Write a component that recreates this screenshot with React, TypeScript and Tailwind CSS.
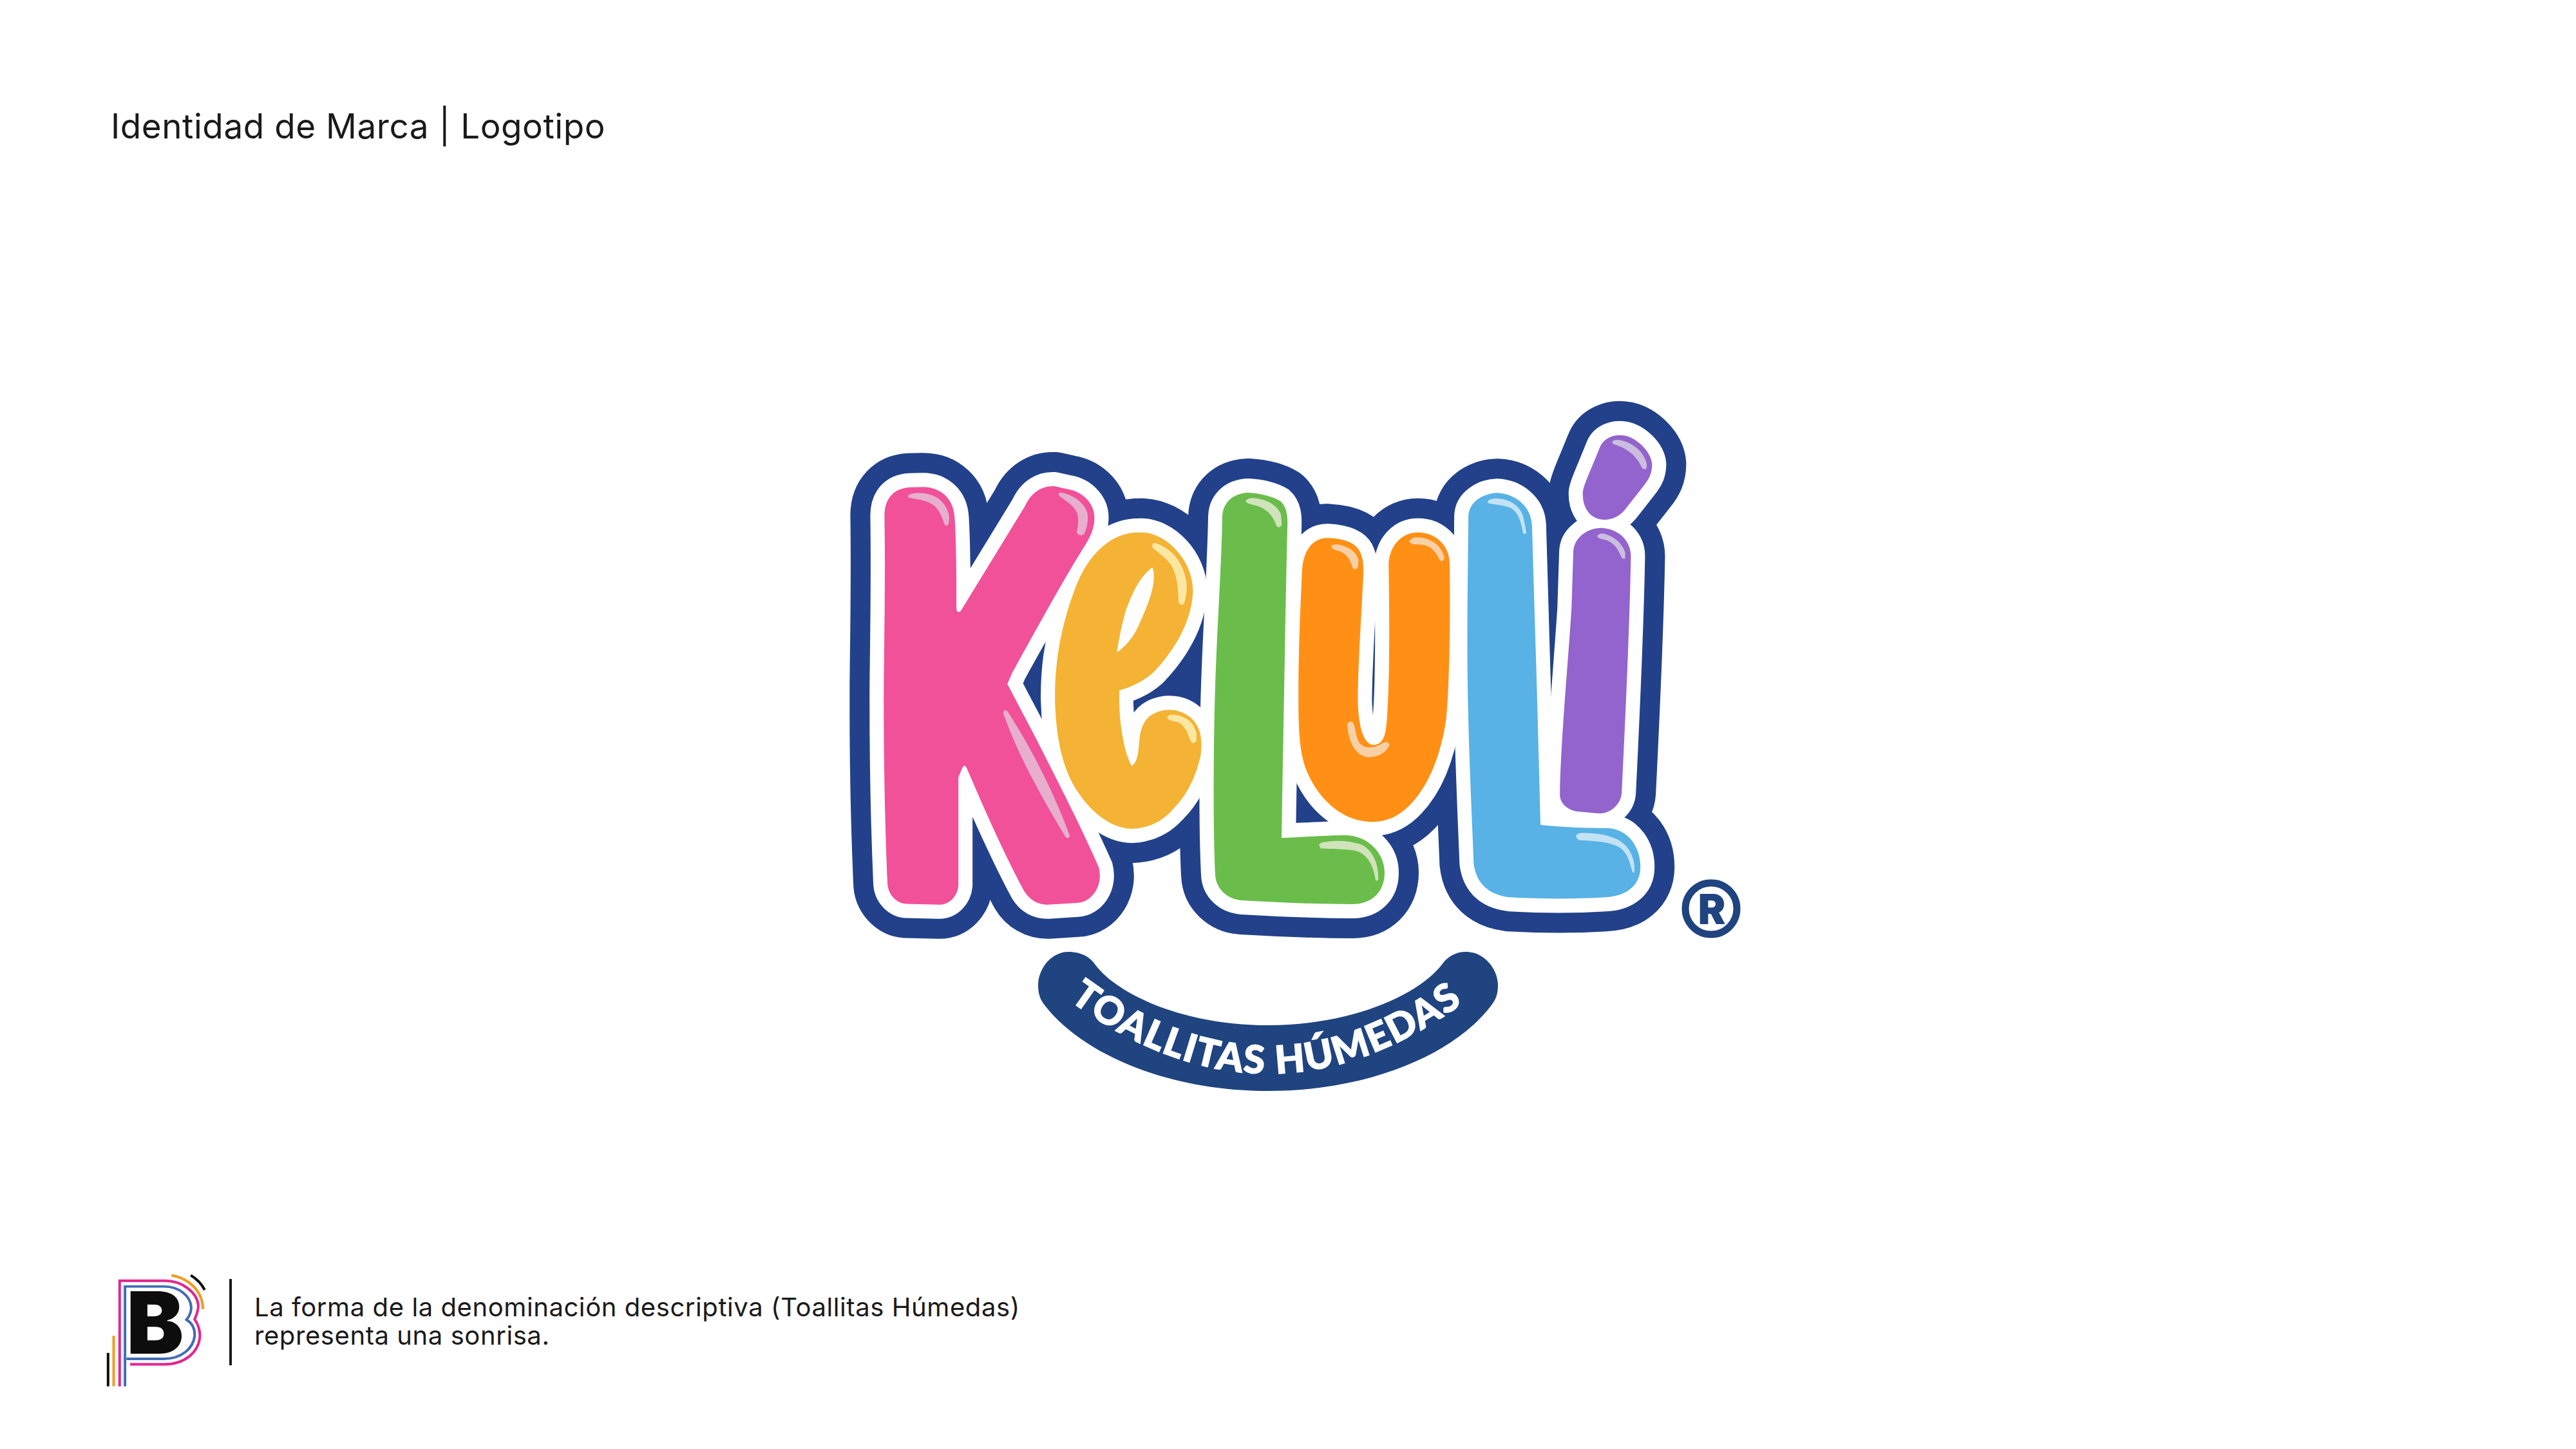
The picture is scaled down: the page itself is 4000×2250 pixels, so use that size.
import React from "react";

// letter shapes were traced from crops, so each one keeps the crop's own coords
const CROP_A = "matrix(0.5102 0 0 0.574 1280 600)";
const CROP_B = "matrix(0.5485 0 0 0.574 1900 600)";

type Letter = {
  d: string;
  fill: string;
  shine: string;
  transform?: string;
  glints: { d: string; transform?: string }[];
};

const letters: Letter[] = [
  {
    // K
    d: "M183 350 C183 300 215 275 260 273 L300 272 C350 272 395 300 397 360 C402 430 402 520 402 603 Q405 615 415 608 L610 325 C630 285 665 268 700 270 L740 278 C790 285 825 320 822 360 C820 395 800 420 785 442 C720 535 650 650 590 745 Q570 775 557 805 L640 945 C700 1050 770 1170 835 1300 C850 1350 815 1395 770 1397 L680 1402 C650 1402 625 1390 608 1365 C550 1270 490 1150 433 1032 Q427 1020 420 1032 L408 1058 L408 1350 C405 1380 380 1402 350 1402 L250 1400 C220 1398 192 1375 192 1340 C185 1200 180 1000 181 800 C183 650 186 500 183 350 Z",
    fill: "#F15198",
    shine: "#E7AECE",
    transform: CROP_A,
    glints: [
      { d: "M255 295 C270 285 320 285 350 305 C375 325 385 350 378 372 Q372 382 365 372 C355 345 345 325 320 315 C300 305 270 305 255 300Z" },
      { d: "M712 293 Q715 285 725 288 C760 295 790 315 800 340 C805 360 800 385 790 400 Q778 408 768 395 C775 370 775 350 765 335 C750 315 725 305 712 293Z" },
      { d: "M545 880 Q550 872 558 880 C620 965 690 1080 747 1215 Q745 1225 735 1220 C670 1125 590 1000 545 885Z" },
    ],
  },
  {
    // e
    d: "M960 395 C1040 393 1120 470 1122 550 C1120 640 1060 720 1000 775 C965 802 930 815 898 822 C895 880 905 975 935 1027 C955 1015 955 990 958 965 C962 920 975 895 1010 882 C1050 868 1095 875 1125 905 C1150 930 1150 970 1145 1000 C1130 1060 1100 1110 1060 1145 C1025 1180 985 1195 935 1197 C870 1195 810 1150 770 1095 C725 1035 705 950 702 850 C700 750 720 650 760 555 C790 480 830 440 875 415 C905 400 930 395 960 395 Z M998 490 C960 515 940 555 920 600 C905 640 898 680 890 720 C915 705 940 680 955 650 C980 600 1000 560 1003 520 C1003 505 1002 495 998 490 Z",
    fill: "#F4B334",
    shine: "#FCE7A2",
    transform: CROP_A,
    glints: [
      { d: "M998 430 Q1000 420 1012 425 C1060 440 1095 480 1102 530 C1105 550 1100 575 1095 588 Q1085 595 1078 585 C1078 550 1075 520 1060 490 C1045 465 1015 450 998 435Z" },
      { d: "M1043 895 Q1048 887 1060 888 C1095 890 1125 905 1133 940 L1132 960 Q1122 970 1115 960 C1105 935 1095 915 1075 908 C1060 905 1048 905 1043 895Z" },
    ],
  },
  {
    // L
    d: "M1898 804 C1898 780 1915 766 1938 765 C1955 766 1975 770 1988 778 C1998 787 2000 800 1999 820 C1996 950 1993 1130 1990 1301 C2020 1300 2060 1297 2090 1297 C2125 1298 2150 1325 2150 1355 C2150 1385 2130 1404 2100 1404 C2040 1404 1980 1401 1928 1398 C1905 1396 1888 1380 1887 1358 C1884 1300 1884 1200 1886 1100 C1888 1000 1896 900 1898 804Z",
    fill: "#6ABD4A",
    shine: "#D0E3BB",
    glints: [
      { transform: CROP_B, d: "M62 310 Q70 300 85 302 C120 305 150 320 162 345 L165 375 Q158 385 150 378 C140 350 125 335 100 325 C85 320 65 318 62 310Z" },
      { transform: CROP_B, d: "M270 1240 Q275 1232 290 1232 C320 1228 350 1228 385 1238 C420 1250 440 1290 438 1335 Q432 1340 430 1335 C425 1300 410 1270 380 1258 C350 1250 300 1252 275 1250 Z" },
    ],
  },
  {
    // u
    d: "M222 500 C225 440 255 410 295 410 C335 412 370 420 385 445 C395 465 397 480 395 520 C390 620 380 760 380 850 C382 920 395 968 425 970 C455 968 460 940 463 890 C470 800 470 620 467 480 C470 430 505 395 550 395 C600 395 640 430 640 480 C642 620 640 800 630 900 C615 1000 580 1080 530 1130 C495 1165 460 1178 420 1178 C340 1178 270 1120 235 1040 C210 980 212 900 212 800 C213 680 218 590 222 500Z",
    fill: "#FF9015",
    shine: "#F9D0A6",
    transform: CROP_B,
    glints: [
      { d: "M305 432 Q310 425 325 428 C350 432 375 445 382 470 L380 490 Q372 500 365 490 C358 465 345 450 325 445 C315 442 305 440 305 432Z" },
      { d: "M525 420 Q530 410 545 408 C580 408 615 425 625 462 Q622 478 612 470 C600 445 585 430 560 428 C545 428 530 428 525 420Z" },
      { d: "M350 915 Q355 903 365 908 C375 920 372 945 385 965 C395 975 415 985 450 965 Q465 958 470 970 C460 990 440 1003 410 1003 C380 1000 355 975 350 915Z" },
    ],
  },
  {
    // second L
    d: "M693 350 C695 315 730 290 775 288 C820 290 870 320 873 375 C880 600 890 900 897 1186 C950 1192 1030 1195 1090 1195 C1150 1200 1180 1250 1180 1300 C1180 1350 1140 1380 1080 1382 C1000 1387 900 1387 810 1382 C750 1375 715 1345 708 1290 C700 1100 690 900 690 700 C690 580 692 460 693 350Z",
    fill: "#58B2E5",
    shine: "#C3E3F4",
    transform: CROP_B,
    glints: [
      { d: "M748 310 Q755 303 770 303 C810 303 845 325 850 360 L857 395 Q853 403 848 397 C842 370 838 345 815 330 C795 320 755 320 748 315Z" },
      { d: "M998 1215 Q1003 1207 1020 1208 C1060 1208 1120 1215 1145 1250 C1160 1270 1165 1295 1163 1315 Q1160 1318 1157 1312 C1150 1290 1145 1265 1125 1250 C1095 1230 1040 1230 1010 1228 C1000 1225 998 1220 998 1215Z" },
    ],
  },
  {
    // i stem
    d: "M990 450 C990 410 1030 383 1070 383 C1115 385 1153 415 1153 460 C1150 620 1140 850 1127 1100 C1125 1130 1095 1157 1060 1155 L1000 1150 C970 1145 950 1125 952 1100 C955 950 975 750 985 600 Z",
    fill: "#9364CD",
    shine: "#CBBDE0",
    transform: CROP_B,
    glints: [
      { d: "M1058 405 Q1062 397 1075 398 C1105 405 1130 425 1137 450 L1137 465 Q1130 470 1125 460 C1115 435 1100 420 1080 415 C1068 412 1060 412 1058 405Z" },
    ],
  },
  {
    // i dot
    d: "M1065 165 C1075 140 1105 128 1135 133 C1170 140 1210 175 1213 210 C1213 235 1205 250 1190 268 L1135 335 C1115 358 1085 365 1060 358 C1030 350 1015 320 1017 285 C1020 265 1040 225 1065 165Z",
    fill: "#9364CD",
    shine: "#CBBDE0",
    transform: CROP_B,
    glints: [
      { d: "M1100 150 Q1105 143 1120 145 C1155 150 1190 175 1198 210 L1197 222 Q1190 228 1183 218 C1170 190 1145 170 1115 160 C1105 157 1100 155 1100 150Z" },
    ],
  },
];

function KeluliLogo() {
  return (
    <svg
      width="1480"
      height="1120"
      viewBox="1260 600 1480 1120"
      role="img"
      aria-label="Keluli Toallitas Húmedas"
    >
      {/* navy and white rims first, so the letters' rims merge into one outline */}
      {[
        { stroke: "#22418A", width: 106 },
        { stroke: "#FFFFFF", width: 44 },
      ].map((rim) => (
        <g key={rim.stroke}>
          {letters.map((l, i) => (
            <path
              key={i}
              d={l.d}
              transform={l.transform}
              fill={rim.stroke}
              stroke={rim.stroke}
              strokeWidth={rim.width}
              strokeLinejoin="round"
              vectorEffect="non-scaling-stroke"
            />
          ))}
        </g>
      ))}
      {letters.map((l, i) => (
        <g key={i}>
          <path d={l.d} transform={l.transform} fill={l.fill} fillRule="evenodd" />
          {l.glints.map((g, j) => (
            <path key={j} d={g.d} transform={g.transform ?? l.transform} fill={l.shine} />
          ))}
        </g>
      ))}

      {/* registered mark */}
      <circle cx="2657" cy="1411" r="40" fill="none" stroke="#1F4480" strokeWidth="11" />
      <text
        x="2658"
        y="1435"
        textAnchor="middle"
        fontFamily="Inter, sans-serif"
        fontWeight="900"
        fontSize="64"
        fill="#1F4480"
      >
        R
      </text>

      {/* smile banner */}
      <path
        d="M1659 1478 C1680 1478 1693 1487 1700 1497 C1735 1545 1840 1592 1969 1592 C2098 1592 2205 1545 2241 1495 C2250 1484 2262 1478 2276 1478 C2305 1478 2326 1505 2326 1530 C2326 1545 2322 1553 2315 1562 C2260 1635 2130 1694 1969 1694 C1810 1694 1680 1635 1623 1562 C1616 1553 1612 1545 1612 1530 C1612 1505 1632 1478 1659 1478Z"
        fill="#1F4480"
      />
      <path id="smile-line" d="M1660 1553 Q1969 1781 2278 1553 L2320 1520" fill="none" />
      <text
        fontFamily="Lato, sans-serif"
        fontWeight="900"
        fontSize="60"
        fill="#FFFFFF"
        stroke="#FFFFFF"
        strokeWidth="1.5"
      >
        <textPath href="#smile-line" textLength="662" lengthAdjust="spacing">
          TOALLITAS HÚMEDAS
        </textPath>
      </text>
    </svg>
  );
}

function StudioMark() {
  return (
    <svg
      width="160"
      height="178"
      viewBox="70 80 480 535"
      fill="none"
      strokeWidth="12"
      className="overflow-visible"
    >
      <path d="M84 452V608" stroke="#0D0D0D" />
      <path d="M110 372V608" stroke="#F39A1E" />
      <path
        d="M138 608V115H350C430 115 500 170 505 230C505 260 495 280 488 295C505 320 515 345 512 380C505 450 440 505 350 505H187"
        stroke="#E5238F"
      />
      <path
        d="M163 608V142H345C420 142 470 190 472 240C472 265 460 285 450 297C480 315 490 345 488 375C480 430 430 480 340 480H170"
        stroke="#3F6DB5"
      />
      <path d="M380 90C460 105 525 160 527 248" stroke="#F39A1E" />
      <path d="M470 90C495 105 520 130 535 158" stroke="#0D0D0D" />
      <text
        x="170"
        y="455"
        fontFamily="Inter, sans-serif"
        fontWeight="900"
        fontSize="399"
        fill="#0D0D0D"
      >
        B
      </text>
    </svg>
  );
}

export default function App() {
  return (
    <div className="flex h-[2250px] w-[4000px] flex-col bg-white font-['Inter',sans-serif] text-[#1a1a1a]">
      <header className="pl-[172px] pt-[165px]">
        <h1 className="text-[53px] leading-[62px] font-normal tracking-[0.55px]">
          Identidad de Marca | Logotipo
        </h1>
      </header>

      <main className="mt-[373px] flex justify-center">
        <KeluliLogo />
      </main>

      <footer className="mt-[257px] flex items-center pl-[163px]">
        <StudioMark />
        <div className="ml-[33px] mb-[26px] h-[134px] w-[4px] bg-[#1a1a1a]" />
        <p className="ml-[35px] mb-[28px] text-[40px] leading-[44px] tracking-[0.58px]">
          La forma de la denominación descriptiva (Toallitas Húmedas)
          <br />
          representa una sonrisa.
        </p>
      </footer>
    </div>
  );
}
